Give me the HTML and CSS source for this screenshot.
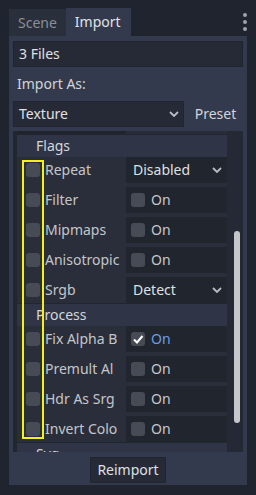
FILE: index.html
```html
<!DOCTYPE html>
<html>
<head>
<meta charset="utf-8">
<link rel="stylesheet" href="styles.css">
</head>
<body>
<div class="dock">
  <div class="tabbar">
    <div class="tab">Scene</div>
    <div class="tab active">Import</div>
    <div class="spacer"></div>
    <svg class="menu" width="6" height="20" viewBox="0 0 6 20"><circle cx="3" cy="3" r="2" fill="#9ea2aa"/><circle cx="3" cy="10" r="2" fill="#9ea2aa"/><circle cx="3" cy="17" r="2" fill="#9ea2aa"/></svg>
  </div>
  <div class="panel">
    <div class="field">3 Files</div>
    <div class="caption">Import As:</div>
    <div class="typerow">
      <div class="select-btn"><span>Texture</span><svg width="10" height="6" viewBox="0 0 10 6"><polyline points="1,1 5,5 9,1" fill="none" stroke="#b9bcc2" stroke-width="1.8"/></svg></div>
      <div class="preset">Preset</div>
    </div>
    <div class="inspector">
      <div class="content">
        <div class="tail"><div class="tail-l"></div><div class="tail-r"></div></div>
        <div class="section">
          <div class="sec-head">Flags</div>
          <div class="props">
            <div class="prop"><div class="lab"><span class="key"></span><span class="name">Repeat</span></div><div class="val"><span class="vtext">Disabled</span><svg class="chev" width="10" height="6" viewBox="0 0 10 6"><polyline points="1,1 5,5 9,1" fill="none" stroke="#b9bcc2" stroke-width="1.8"/></svg></div></div>
            <div class="prop"><div class="lab"><span class="key"></span><span class="name">Filter</span></div><div class="val"><span class="box"></span><span class="on">On</span></div></div>
            <div class="prop"><div class="lab"><span class="key"></span><span class="name">Mipmaps</span></div><div class="val"><span class="box"></span><span class="on">On</span></div></div>
            <div class="prop"><div class="lab"><span class="key"></span><span class="name">Anisotropic</span></div><div class="val"><span class="box"></span><span class="on">On</span></div></div>
            <div class="prop"><div class="lab"><span class="key"></span><span class="name">Srgb</span></div><div class="val"><span class="vtext">Detect</span><svg class="chev" width="10" height="6" viewBox="0 0 10 6"><polyline points="1,1 5,5 9,1" fill="none" stroke="#b9bcc2" stroke-width="1.8"/></svg></div></div>
          </div>
        </div>
        <div class="section">
          <div class="sec-head">Process</div>
          <div class="props">
            <div class="prop"><div class="lab"><span class="key"></span><span class="name">Fix Alpha B</span></div><div class="val"><span class="box checked"><svg width="14" height="14" viewBox="0 0 14 14"><polyline points="3,7.5 6,10.5 11.5,4" fill="none" stroke="#ffffff" stroke-width="2"/></svg></span><span class="on blue">On</span></div></div>
            <div class="prop"><div class="lab"><span class="key"></span><span class="name">Premult Al</span></div><div class="val"><span class="box"></span><span class="on">On</span></div></div>
            <div class="prop"><div class="lab"><span class="key"></span><span class="name">Hdr As Srg</span></div><div class="val"><span class="box"></span><span class="on">On</span></div></div>
            <div class="prop"><div class="lab"><span class="key"></span><span class="name">Invert Colo</span></div><div class="val"><span class="box"></span><span class="on">On</span></div></div>
          </div>
        </div>
        <div class="section">
          <div class="sec-head">Svg</div>
        </div>
      </div>
      <div class="vscroll"><div class="grabber"></div></div>
    </div>
    <div class="bottom"><div class="button">Reimport</div></div>
  </div>
</div>
<div class="highlight"></div>
</body>
</html>
```
FILE: styles.css
```css
html, body {
  margin: 0;
  padding: 0;
}
body {
  width: 256px;
  height: 495px;
  background: #20242e;
  font-family: "Noto Sans", "DejaVu Sans", sans-serif;
  font-size: 14px;
  color: #e0e0e0;
  position: relative;
  overflow: hidden;
}
.dock {
  padding: 8px 9px 0 9px;
}
.tabbar {
  display: flex;
  align-items: flex-end;
  height: 28px;
}
.tab {
  height: 27px;
  padding: 0 9px;
  display: flex;
  align-items: center;
  background: #2a2f3c;
  color: #8a8e97;
  line-height: 1;
  box-sizing: border-box;
}
.tab.active {
  height: 28px;
  padding: 0 10px 0 9px;
  background: #333a4d;
  color: #e2e3e5;
}
.spacer {
  flex: 1;
}
.menu {
  align-self: flex-start;
  margin-top: 4px;
  margin-right: -1px;
}
.panel {
  background: #333a4d;
  height: 449px;
  box-sizing: border-box;
  padding: 5px 4px 3px 4px;
  display: flex;
  flex-direction: column;
  gap: 4px;
}
.panel > * {
  flex-shrink: 0;
}
.field {
  height: 26px;
  box-sizing: border-box;
  background: #262a37;
  border: 1px solid #20242e;
  display: flex;
  align-items: center;
  padding-left: 5px;
  line-height: 1;
  color: #e0e0e0;
}
.caption {
  height: 26px;
  display: flex;
  align-items: center;
  padding-left: 4px;
  color: #d2d4d8;
  line-height: 1;
}
.typerow {
  height: 26px;
  display: flex;
  gap: 4px;
}
.select-btn {
  flex: 1;
  background: #262a37;
  border: 1px solid #21252f;
  box-sizing: border-box;
  display: flex;
  align-items: center;
  justify-content: space-between;
  padding: 0 4px 0 5px;
  line-height: 1;
}
.preset {
  width: 55px;
  display: flex;
  align-items: center;
  justify-content: center;
  color: #d2d4d8;
  line-height: 1;
}
.inspector {
  height: 321px;
  background: #22262f;
  display: flex;
  padding-left: 4px;
  overflow: hidden;
}
.content {
  width: 210px;
  display: flex;
  flex-direction: column;
  gap: 1px;
}
.content > * {
  flex-shrink: 0;
}
.tail {
  height: 3px;
  display: flex;
}
.tail-l {
  width: 109px;
  background: #20242d;
}
.tail-r {
  flex: 1;
  background: #282c38;
}
.sec-head {
  height: 22px;
  background: #2f3446;
  display: flex;
  align-items: center;
  padding-left: 19px;
  color: #d4d6da;
  line-height: 1;
}
.props {
  display: flex;
  flex-direction: column;
  gap: 4px;
  background: #2a2e3a;
}
.prop {
  height: 26px;
  display: flex;
  flex-shrink: 0;
}
.lab {
  width: 109px;
  display: flex;
  align-items: center;
  padding-left: 9px;
  box-sizing: border-box;
  overflow: hidden;
  white-space: nowrap;
}
.key, .box {
  width: 14px;
  height: 14px;
  border-radius: 3px;
  background: #474b56;
  flex: none;
  display: block;
}
.key {
  margin-right: 5px;
}
.name {
  color: #c3c6cb;
  line-height: 1;
}
.val {
  flex: 1;
  background: #21252e;
  display: flex;
  align-items: center;
  padding: 0 5px;
  line-height: 1;
}
.vtext {
  flex: 1;
  padding-left: 2px;
  color: #dfe0e2;
}
.box {
  margin-right: 6px;
}
.box svg {
  display: block;
}
.on {
  color: #c6c8cc;
}
.on.blue {
  color: #6a9de6;
}
.vscroll {
  width: 16px;
  padding-top: 100px;
  box-sizing: border-box;
  background: #252935;
}
.grabber {
  width: 6px;
  height: 192px;
  margin-left: 7px;
  background: #c4c6ca;
  border-radius: 3px;
}
.bottom {
  margin-top: 1px;
  display: flex;
  justify-content: center;
}
.button {
  height: 26px;
  box-sizing: border-box;
  padding: 0 6px;
  background: #262a37;
  border: 1px solid #21252f;
  display: flex;
  align-items: center;
  line-height: 1;
  color: #dfe0e2;
}
.highlight {
  position: absolute;
  left: 22px;
  top: 160px;
  width: 22px;
  height: 279px;
  box-sizing: border-box;
  border: 2px solid #f2f21a;
}
```
